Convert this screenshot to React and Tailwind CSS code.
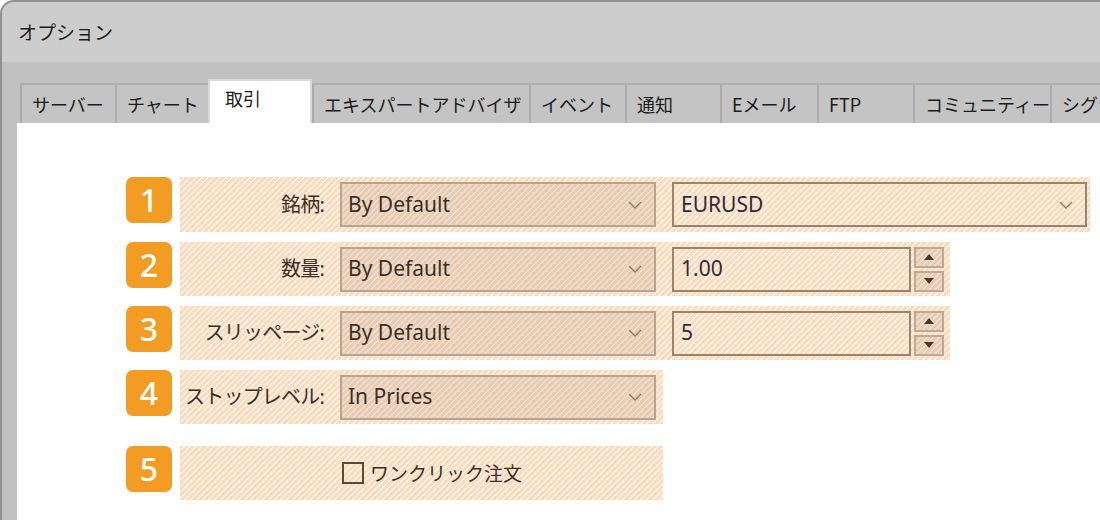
import React from 'react';

const tabs = [
    { label: 'サーバー', w: 'w-[95px]' },
    { label: 'チャート', w: 'w-[93px]' },
    { label: '取引', w: 'w-[104px]', active: true },
    { label: 'エキスパートアドバイザ', w: 'w-[217px]' },
    { label: 'イベント', w: 'w-[96px]' },
    { label: '通知', w: 'w-[95px]' },
    { label: 'Eメール', w: 'w-[97px]' },
    { label: 'FTP', w: 'w-[96px]' },
    { label: 'コミュニティー', w: 'w-[137px]' },
    { label: 'シグナル', w: 'w-[110px]' },
];

// diagonal "/" hatch, 6px tile so it repeats cleanly
const hatch = "bg-[linear-gradient(135deg,#fadcc1_33%,#fef1e5_33%,#fef1e5_50%,#fadcc1_50%,#fadcc1_83%,#fef1e5_83%)] bg-[length:6px_6px]";

function Badge({ n }) {
    return (
        <div className="w-[46px] h-[46px] shrink-0 rounded-[7px] bg-[#f39c24] text-white text-[32px] font-medium leading-none flex items-center justify-center">
            {n}
        </div>
    );
}

function Chevron() {
    return (
        <svg width="14" height="8" viewBox="0 0 14 8" className="shrink-0">
            <polyline points="1,1 7,7 13,1" fill="none" stroke="#8c7a69" strokeWidth="1.3" />
        </svg>
    );
}

// grey "disabled" combo
function Combo({ value, w = "w-[316px]" }) {
    return (
        <div className={`${w} h-[45px] shrink-0 border-2 border-[#b8a390] bg-[#5a4632]/10 flex items-center justify-between pl-[6px] pr-[12px] text-[21px] text-[#3b2f26]`}>
            <span>{value}</span>
            <Chevron />
        </div>
    );
}

function Field({ value, w, chevron }) {
    return (
        <div className={`${w} h-[45px] shrink-0 border-2 border-[#9a8471] flex items-center justify-between pl-[7px] pr-[12px] text-[21px] text-[#2e2b3a]`}>
            <span>{value}</span>
            {chevron && <Chevron />}
        </div>
    );
}

function Spinner() {
    return (
        <div className="flex flex-col gap-[3px] ml-[3px]">
            <div className="w-[30px] h-[21px] border-2 border-[#bda996] bg-[#5a4632]/10 flex items-center justify-center">
                <svg width="10" height="6" viewBox="0 0 10 6"><polygon points="0,6 5,0 10,6" fill="#4a3a2c" /></svg>
            </div>
            <div className="w-[30px] h-[21px] border-2 border-[#bda996] bg-[#5a4632]/10 flex items-center justify-center">
                <svg width="10" height="6" viewBox="0 0 10 6"><polygon points="0,0 10,0 5,6" fill="#4a3a2c" /></svg>
            </div>
        </div>
    );
}

function Label({ children }) {
    return (
        <div className="w-[145px] shrink-0 text-right text-[20px] tracking-[-0.8px] text-[#3b2f26] pr-[1px] whitespace-nowrap">
            {children}
        </div>
    );
}

export default function App() {
    return (
        <div className="w-[1100px] h-[520px] overflow-hidden bg-white font-['Noto_Sans','Noto_Sans_CJK_JP',sans-serif]">
            <div className="h-full flex flex-col bg-[#c1c1c1] border-l-2 border-t-2 border-[#909090] rounded-tl-[14px] overflow-hidden">
                {/* Title bar */}
                <div className="h-[60px] shrink-0 bg-[#cdcdcd] flex items-center pl-[16px] text-[19px] text-[#1c1c1c] font-['Noto_Sans_CJK_JP',sans-serif]">
                    オプション
                </div>

                {/* Tabs */}
                <div className="h-[61px] shrink-0 flex items-end pl-[18px] font-['Noto_Sans_CJK_JP',sans-serif] overflow-hidden">
                    {tabs.map((t) =>
                        t.active ? (
                            <div key={t.label} className={`${t.w} h-[45px] shrink-0 bg-white border-2 border-b-0 border-[#dadada] pl-[15px] pt-[4px] text-[18px] text-[#1c1c1c] relative z-10 -mb-[1px]`}>
                                {t.label}
                            </div>
                        ) : (
                            <div key={t.label} className={`${t.w} h-[40px] shrink-0 bg-[#c4c4c4] border-t-2 border-l-2 border-[#adadad] pl-[10px] pt-[6px] text-[18px] text-[#1c1c1c] whitespace-nowrap overflow-hidden`}>
                                {t.label}
                            </div>
                        )
                    )}
                </div>

                {/* Content */}
                <div className="flex-1 ml-[15px] bg-white pt-[54px] pl-[109px]">
                    <div className="flex flex-col gap-[10px]">
                        <div className="flex items-start gap-[8px]">
                            <Badge n="1" />
                            <div className={`${hatch} h-[55px] flex items-center pr-[3px]`}>
                                <Label>銘柄:</Label>
                                <div className="ml-[15px]"><Combo value="By Default" /></div>
                                <div className="ml-[16px]"><Field value="EURUSD" w="w-[415px]" chevron /></div>
                            </div>
                        </div>

                        <div className="flex items-start gap-[8px]">
                            <Badge n="2" />
                            <div className={`${hatch} h-[54px] flex items-center pr-[6px]`}>
                                <Label>数量:</Label>
                                <div className="ml-[15px]"><Combo value="By Default" /></div>
                                <div className="ml-[16px]"><Field value="1.00" w="w-[239px]" /></div>
                                <Spinner />
                            </div>
                        </div>

                        <div className="flex items-start gap-[8px]">
                            <Badge n="3" />
                            <div className={`${hatch} h-[54px] flex items-center pr-[6px]`}>
                                <Label>スリッページ:</Label>
                                <div className="ml-[15px]"><Combo value="By Default" /></div>
                                <div className="ml-[16px]"><Field value="5" w="w-[239px]" /></div>
                                <Spinner />
                            </div>
                        </div>

                        <div className="flex items-start gap-[8px]">
                            <Badge n="4" />
                            <div className={`${hatch} h-[54px] flex items-center pr-[7px]`}>
                                <Label>ストップレベル:</Label>
                                <div className="ml-[15px]"><Combo value="In Prices" /></div>
                            </div>
                        </div>

                        <div className="flex items-start gap-[8px] mt-[12px]">
                            <Badge n="5" />
                            <div className={`${hatch} h-[54px] w-[483px] flex items-center pl-[162px]`}>
                                <div className="w-[22px] h-[22px] border-2 border-[#5b4a3b] shrink-0" />
                                <span className="ml-[6px] text-[19px] text-[#3b2f26] font-['Noto_Sans_CJK_JP',sans-serif]">ワンクリック注文</span>
                            </div>
                        </div>
                    </div>
                </div>
            </div>
        </div>
    );
}
